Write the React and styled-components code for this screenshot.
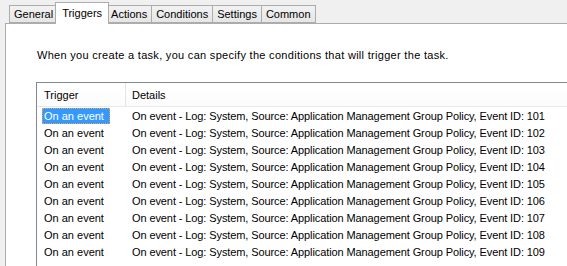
import React from 'react';
import styled, { createGlobalStyle } from 'styled-components';

const GlobalStyle = createGlobalStyle`
  html, body {
    margin: 0;
    padding: 0;
    background: #f0f0f0;
    overflow: hidden;
  }
  body {
    font-family: "Liberation Sans", Arial, sans-serif;
    font-size: 11px;
    color: #000;
  }
`;

const Window = styled.div`
  padding: 2px 0 0 5px;
  width: 640px;
`;

const TabStrip = styled.div`
  display: flex;
  align-items: flex-end;
  height: 21px;
  padding-left: 5px;
`;

const Tab = styled.div`
  position: relative;
  box-sizing: border-box;
  display: flex;
  align-items: center;
  height: ${({ $active }) => ($active ? '22px' : '18px')};
  margin: ${({ $active }) => ($active ? '0 -2px -1px -3px' : '0 0 0 -1px')};
  padding: ${({ $active }) => ($active ? '0 6px 2px 6px' : '0 4px 0 4px')};
  border: 1px solid #acacac;
  border-bottom: ${({ $active }) => ($active ? 'none' : '1px solid #acacac')};
  background: ${({ $active }) => ($active ? '#ffffff' : 'linear-gradient(#f2f2f2, #e6e6e6)')};
  z-index: ${({ $active }) => ($active ? 2 : 1)};
  white-space: nowrap;
`;

const Panel = styled.div`
  border: 1px solid #acacac;
  background: #ffffff;
  padding: 25px 0 0 30px;
  height: 400px;
`;

const Intro = styled.p`
  margin: 0 0 20px 0;
  line-height: 13px;
  padding-left: 1px;
  letter-spacing: 0.3px;
`;

const List = styled.div`
  border: 1px solid #828790;
  background: #ffffff;
  height: 300px;
`;

const HeaderRow = styled.div`
  display: flex;
  height: 23px;
  border-bottom: 1px solid #e5e8ed;
  background: linear-gradient(#ffffff, #fcfcfc);
`;

const HeaderCell = styled.div`
  display: flex;
  align-items: center;
  box-sizing: border-box;
  width: ${({ $w }) => $w};
  padding-left: ${({ $pad }) => $pad}px;
  border-right: ${({ $divider }) => ($divider ? '1px solid #e5e5e5' : 'none')};
  flex: ${({ $w }) => ($w ? 'none' : 1)};
`;

const Row = styled.div`
  display: flex;
  align-items: center;
  height: 17px;
`;

const TriggerCell = styled.div`
  box-sizing: border-box;
  width: 89px;
  padding-left: 5px;
  display: flex;
  align-items: center;
`;

const Label = styled.span`
  display: flex;
  align-items: center;
  box-sizing: border-box;
  height: 16px;
  padding: 0 6px 0 2px;
  background: ${({ $selected }) => ($selected ? '#3399ff' : 'transparent')};
  color: ${({ $selected }) => ($selected ? '#ffffff' : '#000000')};
  outline: ${({ $selected }) => ($selected ? '1px dotted #e8a050' : 'none')};
  outline-offset: -1px;
`;

const DetailsCell = styled.div`
  padding-left: 6px;
  white-space: nowrap;
  letter-spacing: -0.1px;
`;

const tabs = ['General', 'Triggers', 'Actions', 'Conditions', 'Settings', 'Common'];
const eventIds = [101, 102, 103, 104, 105, 106, 107, 108, 109];

export default function App() {
  return (
    <>
      <GlobalStyle />
      <Window>
        <TabStrip>
          {tabs.map((t) => (
            <Tab key={t} $active={t === 'Triggers'}>{t}</Tab>
          ))}
        </TabStrip>
        <Panel>
          <Intro>When you create a task, you can specify the conditions that will trigger the task.</Intro>
          <List>
            <HeaderRow>
              <HeaderCell $w="89px" $pad={7} $divider>Trigger</HeaderCell>
              <HeaderCell $pad={6}>Details</HeaderCell>
            </HeaderRow>
            {eventIds.map((id, i) => (
              <Row key={id}>
                <TriggerCell>
                  <Label $selected={i === 0}>On an event</Label>
                </TriggerCell>
                <DetailsCell>
                  On event - Log: System, Source: Application Management Group Policy, Event ID: {id}
                </DetailsCell>
              </Row>
            ))}
          </List>
        </Panel>
      </Window>
    </>
  );
}
